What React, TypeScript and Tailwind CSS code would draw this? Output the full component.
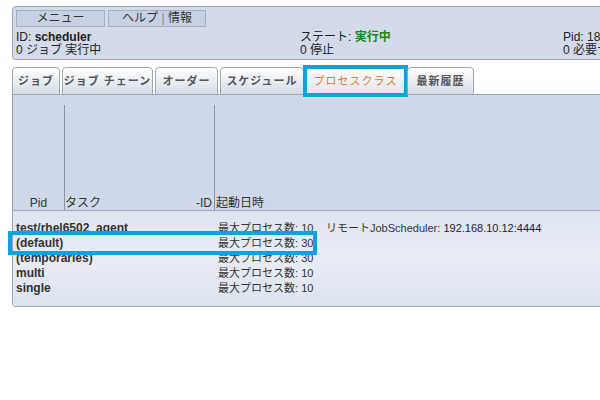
import React from 'react';

const tabs = [
  { label: 'ジョブ', w: 'w-[48px]' },
  { label: 'ジョブ チェーン', w: 'w-[91px]' },
  { label: 'オーダー', w: 'w-[63px]' },
  { label: 'スケジュール', w: 'w-[84px]' },
  { label: 'プロセスクラス', w: 'w-[99px]', active: true },
  { label: '最新履歴', w: 'w-[67px]' },
];

const rows = [
  { name: 'test/rhel6502_agent', max: 10, remote: '192.168.10.12:4444' },
  { name: '(default)', max: 30, marked: true },
  { name: '(temporaries)', max: 30 },
  { name: 'multi', max: 10 },
  { name: 'single', max: 10 },
];

const font = { fontFamily: '"Liberation Sans", Arial, "Noto Sans CJK JP", sans-serif' };

export default function App() {
  return (
    <div className="w-[600px] h-[400px] bg-white overflow-hidden text-[12px] text-[#222]" style={font}>
      {/* header panel */}
      <div className="mt-[6px] ml-[12px] w-[600px] h-[54px] border border-[#9ca3b0] rounded-l-[4px] bg-[#d3daea] pl-[3px] pt-[3px]">
        <div className="flex gap-[3px]">
          <div className="w-[89px] h-[17px] border border-[#a7afbf] bg-[#c8d1e3] text-center leading-[15px] text-[#333]">メニュー</div>
          <div className="w-[98px] h-[17px] border border-[#a7afbf] bg-[#c8d1e3] text-center leading-[15px] text-[#333]">
            ヘルプ <span className="text-[#888]">|</span> 情報
          </div>
        </div>
        <div className="flex mt-[4px] leading-[13px]">
          <div className="w-[284px] shrink-0">
            <div>ID: <span className="font-bold">scheduler</span></div>
            <div>0 ジョブ 実行中</div>
          </div>
          <div className="w-[263px] shrink-0">
            <div>ステート: <span className="font-bold text-[#15891a]">実行中</span></div>
            <div>0 停止</div>
          </div>
          <div className="whitespace-nowrap shrink-0">
            <div>Pid: 18342</div>
            <div>0 必要ナシ</div>
          </div>
        </div>
      </div>

      {/* tabs */}
      <div className="mt-[6px] ml-[12px] h-[29px] flex items-end gap-[2px] border-b border-[#9ca3b0]">
        {tabs.map((t) => (
          <div
            key={t.label}
            className={`relative ${t.w} h-[28px] -mb-px border border-[#a0a6b2] rounded-t-[4px] flex items-center justify-center text-[11px] tracking-[1px] ${
              t.active
                ? 'bg-gradient-to-b from-[#ffffff] to-[#dfe4ee] text-[#e07b1f] border-b-[#dfe4ee]'
                : 'bg-gradient-to-b from-[#ffffff] to-[#d5dbe8] text-[#555] font-bold'
            }`}
          >
            {t.label}
            {t.active && <div className="absolute left-[-4px] right-[-4px] top-[-3px] bottom-[-3px] border-[4px] border-[#0ea3df]" />}
          </div>
        ))}
      </div>

      {/* process class table */}
      <div className="ml-[12px] w-[600px] border-l border-b border-[#9ca3b0] rounded-bl-[4px]">
        <div className="h-[116px] bg-[#cfd8e9] pt-[10px] flex border-b border-[#a0a7b5] leading-[14px] text-[#333]">
          <div className="w-[51px] flex items-end justify-center">Pid</div>
          <div className="w-[150px] border-l border-[#8b93a3] flex items-end justify-between">
            <span>タスク</span>
            <span className="pr-[2px]">-ID</span>
          </div>
          <div className="flex-1 border-l border-[#8b93a3] flex items-end pl-[1px]">起動日時</div>
        </div>
        <div className="bg-gradient-to-b from-[#dfe5f0] via-[#e8ecf5] to-[#dde3ee] pt-[10px] pb-[10px] pl-[3px]">
          {rows.map((r) => (
            <div key={r.name} className="relative grid grid-cols-[202px_108px_1fr] h-[15px] leading-[15px]">
              <span className="font-bold text-[#333]">{r.name}</span>
              <span className="text-[11px] text-[#333]">最大プロセス数: {r.max}</span>
              <span className="text-[11px] text-[#333]">
                {r.remote && (
                  <>
                    リモートJobScheduler: <span className="text-[#223]">{r.remote}</span>
                  </>
                )}
              </span>
              {r.marked && (
                <div className="absolute left-[-8px] top-[-5px] w-[309px] h-[24px] border-[4px] border-[#0ea3df] z-10" />
              )}
            </div>
          ))}
        </div>
      </div>
    </div>
  );
}
